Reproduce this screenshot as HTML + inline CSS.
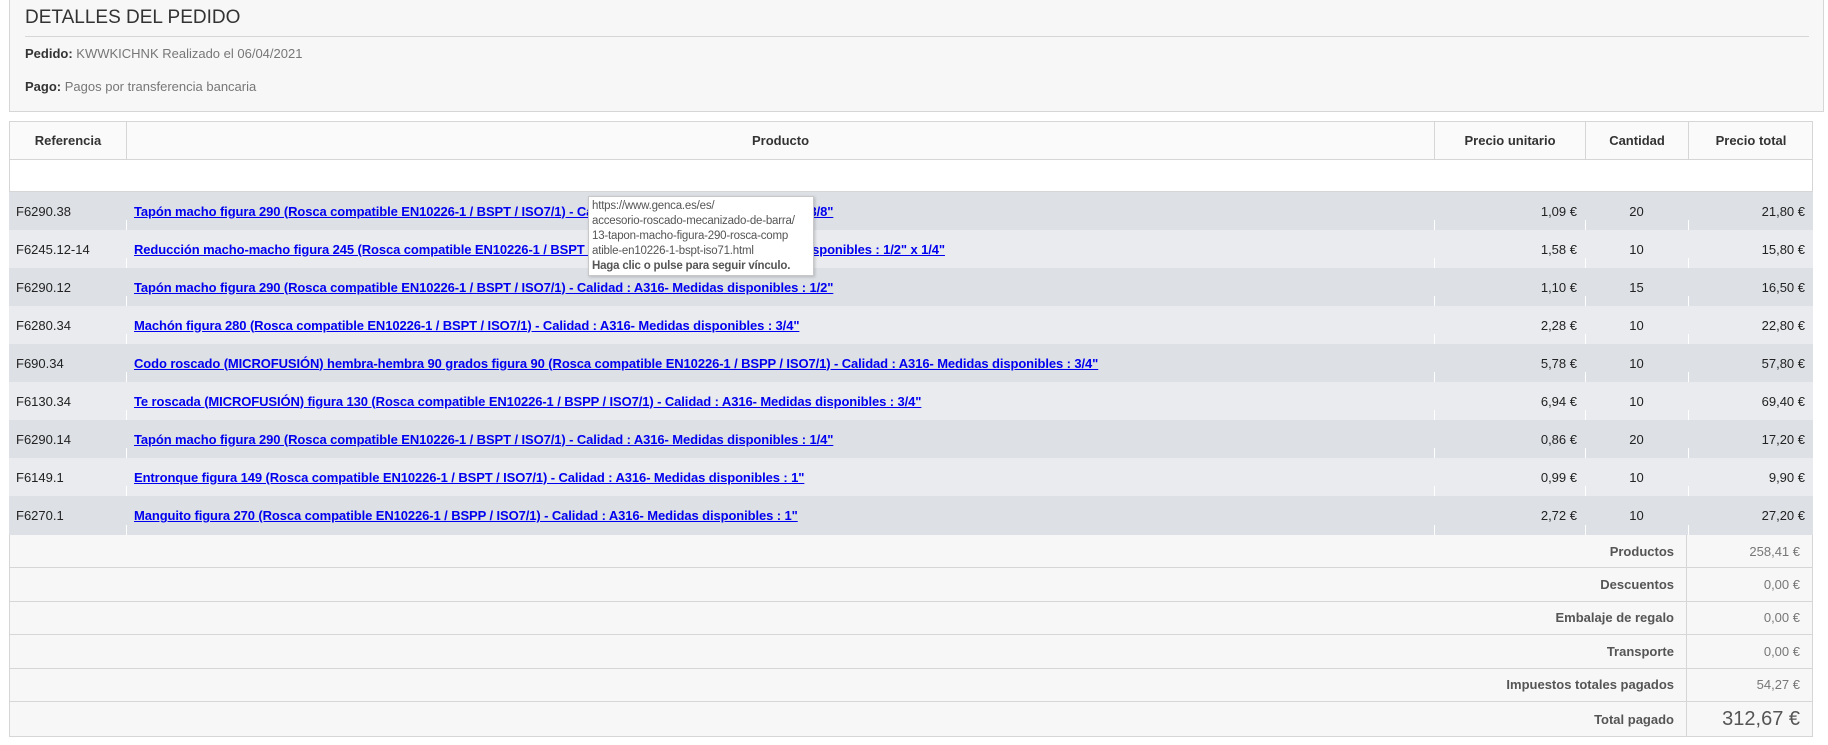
<!DOCTYPE html>
<html><head><meta charset="utf-8"><style>
*{margin:0;padding:0;box-sizing:border-box}
body{width:1828px;height:745px;background:#fff;font-family:"Liberation Sans",Arial,sans-serif;position:relative;overflow:hidden}
.box{position:absolute;left:9px;top:0;width:1815px;height:112px;background:#f7f7f7;border:1px solid #d6d6d6;border-top:none}
.box h1{position:absolute;left:15px;top:7px;font-size:19px;font-weight:normal;color:#333}
.box .hr{position:absolute;left:15px;top:36px;width:1784px;height:1px;background:#d6d6d6}
.box p{position:absolute;left:15px;font-size:13px;color:#777}
.box p b{color:#333}
.t{position:absolute;left:9px;width:1804px}
.hd{top:121px;height:39px;background:#fafafa;border:1px solid #d6d6d6}
.c{position:absolute;top:0;height:100%;display:flex;align-items:center;font-size:13px}
.hd .c{justify-content:center;font-weight:bold;color:#333;border-right:1px solid #d6d6d6}
.emp{top:160px;height:32px;border:1px solid #d6d6d6;border-top:none;background:#fff}
.row{height:38px}
.row .c{color:#222}
.row a{color:#0000ee;font-weight:bold;text-decoration:underline;font-size:13px;letter-spacing:-0.1px}
.tick{position:absolute;bottom:0;width:1px;height:10px;background:#fff}
.sum{height:33.4px;background:#f7f7f7;border:1px solid #d6d6d6;border-top:none}
.sum .l{position:absolute;right:125px;top:0;height:100%;display:flex;align-items:center;font-weight:bold;color:#555;font-size:13px;padding-right:12px;border-right:1px solid #d6d6d6;width:1680px;justify-content:flex-end}
.sum .v{position:absolute;right:12px;top:0;height:100%;display:flex;align-items:center;color:#777;font-size:13px}
.tip{position:absolute;left:588px;top:196px;width:226px;height:80px;background:#fff;border:1px solid #c8c8c8;box-shadow:1px 1px 3px rgba(0,0,0,.2);font-size:11.5px;line-height:15px;color:#555;padding:2px 3px;white-space:nowrap;overflow:hidden;letter-spacing:-0.2px}
</style></head><body>
<div class="box">
<h1>DETALLES DEL PEDIDO</h1>
<div class="hr"></div>
<p style="top:46px"><b>Pedido:</b> KWWKICHNK Realizado el 06/04/2021</p>
<p style="top:79px"><b>Pago:</b> Pagos por transferencia bancaria</p>
</div>
<div class="t hd">
<div class="c" style="left:0;width:117px">Referencia</div>
<div class="c" style="left:117px;width:1308px">Producto</div>
<div class="c" style="left:1425px;width:151px">Precio unitario</div>
<div class="c" style="left:1576px;width:103px">Cantidad</div>
<div class="c" style="left:1679px;width:124px;border-right:none">Precio total</div>
</div>
<div class="t emp"></div>

<div class="t row" style="top:192px;background:#dde1e6"><div class="c" style="left:7px">F6290.38</div><div class="c" style="left:125px"><a>Tapón macho figura 290 (Rosca compatible EN10226-1 / BSPT / ISO7/1) - Calidad : A316- Medidas disponibles : 3/8"</a></div><div class="c" style="right:236px">1,09 €</div><div class="c" style="left:1576px;width:103px;justify-content:center">20</div><div class="c" style="right:8px">21,80 €</div><div class="tick" style="left:117px"></div><div class="tick" style="left:1425px"></div><div class="tick" style="left:1576px"></div><div class="tick" style="left:1679px"></div></div>
<div class="t row" style="top:230px;background:#e9ebee"><div class="c" style="left:7px">F6245.12-14</div><div class="c" style="left:125px"><a>Reducción macho-macho figura 245 (Rosca compatible EN10226-1 / BSPT / ISO7/1) - Calidad : A316- Medidas disponibles : 1/2" x 1/4"</a></div><div class="c" style="right:236px">1,58 €</div><div class="c" style="left:1576px;width:103px;justify-content:center">10</div><div class="c" style="right:8px">15,80 €</div><div class="tick" style="left:117px"></div><div class="tick" style="left:1425px"></div><div class="tick" style="left:1576px"></div><div class="tick" style="left:1679px"></div></div>
<div class="t row" style="top:268px;background:#dde1e6"><div class="c" style="left:7px">F6290.12</div><div class="c" style="left:125px"><a>Tapón macho figura 290 (Rosca compatible EN10226-1 / BSPT / ISO7/1) - Calidad : A316- Medidas disponibles : 1/2"</a></div><div class="c" style="right:236px">1,10 €</div><div class="c" style="left:1576px;width:103px;justify-content:center">15</div><div class="c" style="right:8px">16,50 €</div><div class="tick" style="left:117px"></div><div class="tick" style="left:1425px"></div><div class="tick" style="left:1576px"></div><div class="tick" style="left:1679px"></div></div>
<div class="t row" style="top:306px;background:#e9ebee"><div class="c" style="left:7px">F6280.34</div><div class="c" style="left:125px"><a>Machón figura 280 (Rosca compatible EN10226-1 / BSPT / ISO7/1) - Calidad : A316- Medidas disponibles : 3/4"</a></div><div class="c" style="right:236px">2,28 €</div><div class="c" style="left:1576px;width:103px;justify-content:center">10</div><div class="c" style="right:8px">22,80 €</div><div class="tick" style="left:117px"></div><div class="tick" style="left:1425px"></div><div class="tick" style="left:1576px"></div><div class="tick" style="left:1679px"></div></div>
<div class="t row" style="top:344px;background:#dde1e6"><div class="c" style="left:7px">F690.34</div><div class="c" style="left:125px"><a>Codo roscado (MICROFUSIÓN) hembra-hembra 90 grados figura 90 (Rosca compatible EN10226-1 / BSPP / ISO7/1) - Calidad : A316- Medidas disponibles : 3/4"</a></div><div class="c" style="right:236px">5,78 €</div><div class="c" style="left:1576px;width:103px;justify-content:center">10</div><div class="c" style="right:8px">57,80 €</div><div class="tick" style="left:117px"></div><div class="tick" style="left:1425px"></div><div class="tick" style="left:1576px"></div><div class="tick" style="left:1679px"></div></div>
<div class="t row" style="top:382px;background:#e9ebee"><div class="c" style="left:7px">F6130.34</div><div class="c" style="left:125px"><a>Te roscada (MICROFUSIÓN) figura 130 (Rosca compatible EN10226-1 / BSPP / ISO7/1) - Calidad : A316- Medidas disponibles : 3/4"</a></div><div class="c" style="right:236px">6,94 €</div><div class="c" style="left:1576px;width:103px;justify-content:center">10</div><div class="c" style="right:8px">69,40 €</div><div class="tick" style="left:117px"></div><div class="tick" style="left:1425px"></div><div class="tick" style="left:1576px"></div><div class="tick" style="left:1679px"></div></div>
<div class="t row" style="top:420px;background:#dde1e6"><div class="c" style="left:7px">F6290.14</div><div class="c" style="left:125px"><a>Tapón macho figura 290 (Rosca compatible EN10226-1 / BSPT / ISO7/1) - Calidad : A316- Medidas disponibles : 1/4"</a></div><div class="c" style="right:236px">0,86 €</div><div class="c" style="left:1576px;width:103px;justify-content:center">20</div><div class="c" style="right:8px">17,20 €</div><div class="tick" style="left:117px"></div><div class="tick" style="left:1425px"></div><div class="tick" style="left:1576px"></div><div class="tick" style="left:1679px"></div></div>
<div class="t row" style="top:458px;background:#e9ebee"><div class="c" style="left:7px">F6149.1</div><div class="c" style="left:125px"><a>Entronque figura 149 (Rosca compatible EN10226-1 / BSPT / ISO7/1) - Calidad : A316- Medidas disponibles : 1"</a></div><div class="c" style="right:236px">0,99 €</div><div class="c" style="left:1576px;width:103px;justify-content:center">10</div><div class="c" style="right:8px">9,90 €</div><div class="tick" style="left:117px"></div><div class="tick" style="left:1425px"></div><div class="tick" style="left:1576px"></div><div class="tick" style="left:1679px"></div></div>
<div class="t row" style="top:496px;height:39px;background:#dde1e6"><div class="c" style="left:7px">F6270.1</div><div class="c" style="left:125px"><a>Manguito figura 270 (Rosca compatible EN10226-1 / BSPP / ISO7/1) - Calidad : A316- Medidas disponibles : 1"</a></div><div class="c" style="right:236px">2,72 €</div><div class="c" style="left:1576px;width:103px;justify-content:center">10</div><div class="c" style="right:8px">27,20 €</div><div class="tick" style="left:117px"></div><div class="tick" style="left:1425px"></div><div class="tick" style="left:1576px"></div><div class="tick" style="left:1679px"></div></div>

<div class="t sum" style="top:535px"><div class="l">Productos</div><div class="v">258,41 €</div></div>
<div class="t sum" style="top:568.4px"><div class="l">Descuentos</div><div class="v">0,00 €</div></div>
<div class="t sum" style="top:601.8px"><div class="l">Embalaje de regalo</div><div class="v">0,00 €</div></div>
<div class="t sum" style="top:635.2px"><div class="l">Transporte</div><div class="v">0,00 €</div></div>
<div class="t sum" style="top:668.6px"><div class="l">Impuestos totales pagados</div><div class="v">54,27 €</div></div>
<div class="t sum" style="top:702px;height:35px"><div class="l">Total pagado</div><div class="v" style="font-size:20px;color:#555">312,67 €</div></div>

<div class="tip">https://www.genca.es/es/<br>accesorio-roscado-mecanizado-de-barra/<br>13-tapon-macho-figura-290-rosca-comp<br>atible-en10226-1-bspt-iso71.html<br><b>Haga clic o pulse para seguir vínculo.</b></div>
</body></html>
